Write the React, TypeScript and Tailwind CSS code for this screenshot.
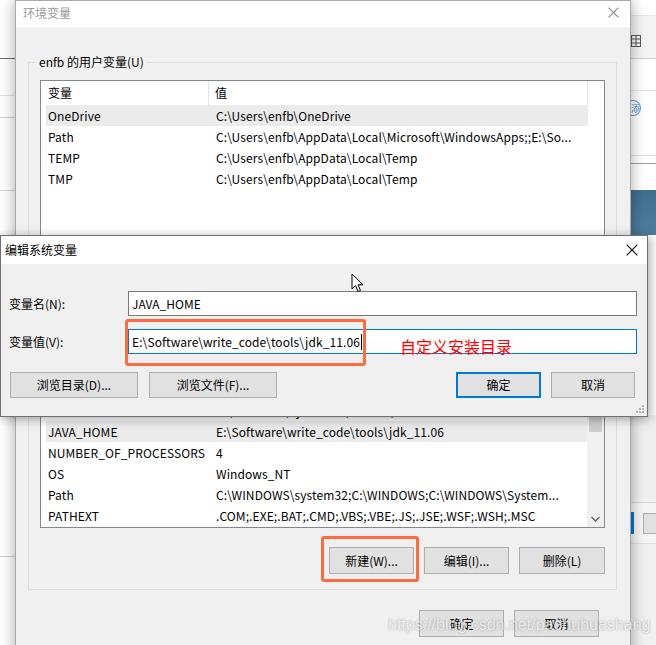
import React from "react";

const font = { fontFamily: '"Noto Sans CJK SC", "Noto Sans", sans-serif' };

type Row = { name: string; value: string; selected?: boolean };

const userRows: Row[] = [
  { name: "OneDrive", value: "C:\\Users\\enfb\\OneDrive", selected: true },
  { name: "Path", value: "C:\\Users\\enfb\\AppData\\Local\\Microsoft\\WindowsApps;;E:\\So..." },
  { name: "TEMP", value: "C:\\Users\\enfb\\AppData\\Local\\Temp" },
  { name: "TMP", value: "C:\\Users\\enfb\\AppData\\Local\\Temp" },
];

const systemRows: Row[] = [
  { name: "ComSpec", value: "C:\\WINDOWS\\system32\\cmd.exe" },
  { name: "DriverData", value: "C:\\Windows\\System32\\Drivers\\DriverData" },
  { name: "JAVA_HOME", value: "E:\\Software\\write_code\\tools\\jdk_11.06", selected: true },
  { name: "NUMBER_OF_PROCESSORS", value: "4" },
  { name: "OS", value: "Windows_NT" },
  { name: "Path", value: "C:\\WINDOWS\\system32;C:\\WINDOWS;C:\\WINDOWS\\System..." },
  { name: "PATHEXT", value: ".COM;.EXE;.BAT;.CMD;.VBS;.VBE;.JS;.JSE;.WSF;.WSH;.MSC" },
  { name: "PROCESSOR_ARCHITECTURE", value: "AMD64" },
];

const CloseIcon = ({ color, size }: { color: string; size: number }) => (
  <svg width={size} height={size} viewBox="0 0 10 10">
    <path d="M0.5 0.5 L9.5 9.5 M9.5 0.5 L0.5 9.5" stroke={color} strokeWidth="1" />
  </svg>
);

const WinButton = ({ label, w, primary }: { label: string; w: string; primary?: boolean }) => (
  <button
    className={`flex h-full ${w} items-center justify-center bg-[#e1e1e1] text-[12px] text-black ${
      primary ? "border-2 border-[#0078d7]" : "border border-[#adadad]"
    }`}
  >
    {label}
  </button>
);

const ListRows = ({ rows }: { rows: Row[] }) => (
  <>
    {rows.map((r) => (
      <div
        key={r.name}
        className={`flex h-[21px] shrink-0 items-center whitespace-nowrap text-[12px] tracking-[0.1px] text-black ${
          r.selected ? "bg-[#ebebeb]" : ""
        }`}
      >
        <span className="w-[168px] shrink-0 overflow-hidden pl-[2px]">{r.name}</span>
        <span className="overflow-hidden pl-[2px]">{r.value}</span>
      </div>
    ))}
  </>
);

const ListHeader = ({ h }: { h: string }) => (
  <div className={`flex ${h} shrink-0 text-[12px] text-black`}>
    <div className="flex w-[163px] items-center border-r border-[#e5e5e5] pl-[2px]">变量</div>
    <div className="flex flex-1 items-center border-r border-[#e5e5e5] pl-[6px]">值</div>
  </div>
);

const GroupBox = ({ label, children }: { label: string; children: React.ReactNode }) => (
  <div className="flex flex-col border border-[#dcdcdc] px-[11px]">
    <span className="-mt-[9px] ml-[-4px] block h-[16px] w-fit bg-[#f0f0f0] px-[3px] text-[12px] leading-[16px] text-black">
      {label}
    </span>
    {children}
  </div>
);

const Background = () => (
  <div className="absolute inset-0 flex justify-between bg-white">
    <div className="flex w-[15px] flex-col">
      <div className="h-[58px] bg-white" />
      <div className="h-px bg-[#6b6b6b]" />
      <div className="h-[36px]" />
      <div className="h-px bg-[#e3e3e3]" />
      <div className="h-[21px]" />
      <div className="h-px bg-[#cfcfcf]" />
      <div className="h-[72px]" />
      <div className="h-px bg-[#d5d5d5]" />
      <div className="h-[365px]" />
      <div className="h-px bg-[#d0d0d0]" />
    </div>
    <div className="flex w-[25px] flex-col">
      <div className="h-[15px] bg-white" />
      <div className="h-px bg-[#e5e5e5]" />
      <div className="flex h-[42px] items-center bg-[#f4f4f4] pt-[8px]">
        <svg width="10" height="12" viewBox="0 0 10 12">
          <rect x="0.5" y="0.5" width="9" height="11" fill="none" stroke="#555" />
          <path d="M0.5 4 H9.5 M0.5 8 H9.5 M5 0.5 V11.5" stroke="#555" />
        </svg>
      </div>
      <div className="h-px bg-[#d0d0d0]" />
      <div className="h-[31px] bg-white" />
      <div className="h-px bg-[#e8e8e8]" />
      <div className="flex h-[64px] items-start bg-white pt-[9px]">
        <div className="flex h-[16px] w-[10px] items-center justify-end overflow-hidden rounded-r-full border border-l-0 border-[#5aa0e0] text-[9px] leading-none text-[#3a8ee0]">
          添
        </div>
      </div>
      <div className="h-px bg-[#e0e0e0]" />
      <div className="h-[7px] bg-white" />
      <div className="h-px bg-[#a0a0a0]" />
      <div className="h-[26px] bg-white" />
      <div className="h-[45px] bg-gradient-to-b from-[#3f6f8f] to-[#4d7f9f]" />
      <div className="h-[180px] bg-white" />
      <div className="h-[87px] bg-[#efefef]" />
      <div className="h-px bg-[#d9d9d9]" />
      <div className="flex h-[40px] items-center gap-[9px] bg-[#f5f5f5]">
        <div className="h-[22px] w-[3px] bg-[#0078d7]" />
        <div className="h-[21px] flex-1 border border-r-0 border-[#adadad] bg-[#e1e1e1]" />
      </div>
      <div className="h-px bg-[#dddddd]" />
      <div className="flex-1 bg-[#f0f0f0]" />
    </div>
  </div>
);

const MainDialog = () => (
  <div className="absolute left-[15px] top-0 flex h-[680px] w-[616px] flex-col border border-[#aaaaaa] bg-[#f0f0f0] shadow-[0_0_14px_rgba(0,0,0,0.35)]">
    <div className="flex h-[26px] shrink-0 items-center justify-between bg-white pb-[3px] pl-[7px] pr-[11px] text-[12px] text-[#9a9a9a]">
      <span>环境变量</span>
      <CloseIcon color="#8a8a8a" size={11} />
    </div>
    <div className="flex flex-col pl-[12px] pr-[13px] pt-[35px]">
      <GroupBox label="enfb 的用户变量(U)">
        <div className="mt-[10px] flex h-[170px] flex-col border border-[#828790] bg-white pl-[5px] pr-[16px]">
          <ListHeader h="h-[24px]" />
          <ListRows rows={userRows} />
        </div>
        <div className="mt-[12px] flex h-[26px] justify-end gap-[10px]">
          <WinButton label="新建(N)..." w="w-[85px]" />
          <WinButton label="编辑(E)..." w="w-[85px]" />
          <WinButton label="删除(D)" w="w-[85px]" />
        </div>
        <div className="h-[16px]" />
      </GroupBox>
      <div className="mt-[32px]">
        <GroupBox label="系统变量(S)">
          <div className="mt-[10px] flex h-[173px] border border-[#828790] bg-white">
            <div className="flex flex-1 flex-col overflow-hidden pl-[5px]">
              <ListHeader h="h-[23px]" />
              <ListRows rows={systemRows} />
            </div>
            <div className="flex w-[17px] flex-col bg-[#f0f0f0]">
              <div className="flex h-[17px] items-center justify-center">
                <svg width="9" height="6" viewBox="0 0 9 6">
                  <path d="M0.5 5 L4.5 1 L8.5 5" fill="none" stroke="#606060" strokeWidth="1.3" />
                </svg>
              </div>
              <div className="mx-[2px] h-[59px] bg-[#cdcdcd]" />
              <div className="flex-1" />
              <div className="flex h-[17px] items-center justify-center">
                <svg width="9" height="6" viewBox="0 0 9 6">
                  <path d="M0.5 1 L4.5 5 L8.5 1" fill="none" stroke="#606060" strokeWidth="1.3" />
                </svg>
              </div>
            </div>
          </div>
          <div className="mt-[19px] flex h-[27px] justify-end gap-[10px]">
            <WinButton label="新建(W)..." w="w-[85px]" />
            <WinButton label="编辑(I)..." w="w-[85px]" />
            <WinButton label="删除(L)" w="w-[86px]" />
          </div>
          <div className="h-[15px]" />
        </GroupBox>
      </div>
      <div className="mr-[18px] mt-[20px] flex h-[27px] justify-end gap-[10px]">
        <WinButton label="确定" w="w-[85px]" />
        <WinButton label="取消" w="w-[85px]" />
      </div>
    </div>
  </div>
);

const EditDialog = () => (
  <div className="absolute left-0 top-[235px] flex h-[182px] w-[648px] flex-col border border-[#707070] bg-[#f0f0f0] shadow-[2px_2px_10px_rgba(0,0,0,0.35)]">
    <div className="flex h-[28px] shrink-0 items-center justify-between bg-white pl-[4px] pr-[9px] text-[12px] text-black">
      <span>编辑系统变量</span>
      <CloseIcon color="#111" size={12} />
    </div>
    <div className="flex flex-1 flex-col pt-[27px]">
      <div className="flex h-[25px] items-center pl-[8px] pr-[10px]">
        <span className="w-[119px] text-[12px] text-black">变量名(N):</span>
        <div className="flex h-full flex-1 items-center border border-[#7a7a7a] bg-white pl-[3px] text-[12px] text-black">
          JAVA_HOME
        </div>
      </div>
      <div className="mt-[13px] flex h-[25px] items-center pl-[8px] pr-[10px]">
        <span className="w-[119px] text-[12px] text-black">变量值(V):</span>
        <div className="flex h-full flex-1 items-center border border-[#0078d7] bg-white pl-[3px] text-[12px] tracking-[0.1px] text-black">
          <span>E:\Software\write_code\tools\jdk_11.06</span>
          <span className="ml-px h-[16px] w-px bg-black" />
        </div>
      </div>
      <div className="mt-[18px] flex h-[26px] items-stretch pl-[9px] pr-[12px]">
        <WinButton label="浏览目录(D)..." w="w-[128px]" />
        <div className="w-[11px]" />
        <WinButton label="浏览文件(F)..." w="w-[128px]" />
        <div className="flex-1" />
        <WinButton label="确定" w="w-[85px]" primary />
        <div className="w-[10px]" />
        <WinButton label="取消" w="w-[84px]" />
      </div>
      <div className="flex flex-1 items-end justify-end pb-[2px] pr-[2px]">
        <svg width="9" height="9" viewBox="0 0 9 9">
          <g fill="#b0b0b0">
            <rect x="6" y="0" width="2" height="2" />
            <rect x="3" y="3" width="2" height="2" />
            <rect x="6" y="3" width="2" height="2" />
            <rect x="0" y="6" width="2" height="2" />
            <rect x="3" y="6" width="2" height="2" />
            <rect x="6" y="6" width="2" height="2" />
          </g>
        </svg>
      </div>
    </div>
  </div>
);

const Cursor = () => (
  <svg className="absolute left-[351px] top-[273px]" width="13" height="20" viewBox="0 0 13 20">
    <path
      d="M1 1 L1 16 L4.5 12.5 L7 18.5 L9.5 17.5 L7 11.8 L12 11.8 Z"
      fill="#fff"
      stroke="#000"
      strokeWidth="1"
      strokeLinejoin="round"
    />
  </svg>
);

export default function App() {
  return (
    <div className="relative h-[645px] w-[656px] overflow-hidden" style={font}>
      <Background />
      <MainDialog />
      <EditDialog />
      <Cursor />
      <div className="absolute left-[125px] top-[319px] h-[47px] w-[241px] rounded-[3px] border-[3px] border-[#ff6b3d]" />
      <div className="absolute left-[400px] top-[335px] text-[16px] leading-[22px] text-[#ff0000]">自定义安装目录</div>
      <div className="absolute left-[321px] top-[536px] h-[46px] w-[98px] rounded-[3px] border-[3px] border-[#ff6b3d]" />
      <div
        className="absolute left-[388px] top-[614px] text-[16px] leading-[22px] text-white/75 [text-shadow:0_0_2px_rgba(0,0,0,0.35)]"
        style={{ fontFamily: '"Liberation Sans", Arial, sans-serif' }}
      >
        https://blog.csdn.net/paohuhuashang
      </div>
    </div>
  );
}
